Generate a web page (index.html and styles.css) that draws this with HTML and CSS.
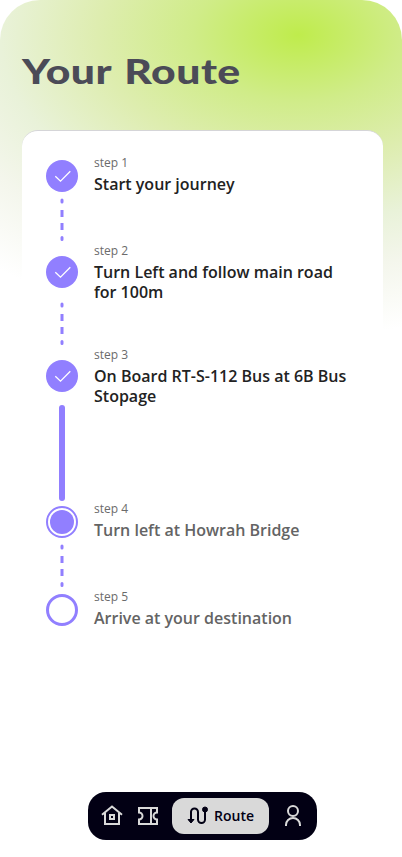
FILE: index.html
```html
<!DOCTYPE html>
<html lang="en">
<head>
<meta charset="utf-8">
<meta name="viewport" content="width=device-width, initial-scale=1">
<title>Your Route</title>
<link rel="stylesheet" href="styles.css">
</head>
<body>
<main class="screen">
  <h1 class="title"><span>Your Route</span></h1>
  <ol class="card">
    <li class="step">
      <div class="rail">
        <span class="dot done"><svg viewBox="0 0 32 32"><path d="M9.300 16.200l5.200 5L24.300 11.200"/></svg></span>
        <svg class="dashes" viewBox="0 0 4 44"><path d="M2 2v2M2 39.500v2"/><path class="flat" d="M2 12v7M2 25v7"/></svg>
      </div>
      <div class="text"><p class="label">step 1</p><p class="name">Start your journey</p></div>
    </li>
    <li class="step tall">
      <div class="rail low">
        <span class="dot done"><svg viewBox="0 0 32 32"><path d="M9.300 16.200l5.200 5L24.300 11.200"/></svg></span>
        <svg class="dashes far" viewBox="0 0 4 44"><path d="M2 2v2M2 39.500v2"/><path class="flat" d="M2 12v7M2 25v7"/></svg>
      </div>
      <div class="text"><p class="label">step 2</p><p class="name">Turn Left and follow main road for 100m</p></div>
    </li>
    <li class="step current">
      <div class="rail low">
        <span class="dot done"><svg viewBox="0 0 32 32"><path d="M9.300 16.200l5.200 5L24.300 11.200"/></svg></span>
        <span class="bar"></span>
      </div>
      <div class="text"><p class="label">step 3</p><p class="name">On Board RT-S-112 Bus at 6B Bus Stopage</p></div>
    </li>
    <li class="step pending">
      <div class="rail">
        <span class="dot active"></span>
        <svg class="dashes" viewBox="0 0 4 44"><path d="M2 2v2M2 39.500v2"/><path class="flat" d="M2 12v7M2 25v7"/></svg>
      </div>
      <div class="text"><p class="label">step 4</p><p class="name">Turn left at Howrah Bridge</p></div>
    </li>
    <li class="step pending">
      <div class="rail"><span class="dot empty"></span></div>
      <div class="text"><p class="label">step 5</p><p class="name">Arrive at your destination</p></div>
    </li>
  </ol>
  <nav class="nav">
    <svg class="icon" viewBox="0 0 24 24"><path d="M2 10.700L12 2.500l10 8.200M5 9v11h14V9M10 11h4v4h-4z"/></svg>
    <svg class="icon" viewBox="0 0 24 24"><path d="M3 4h18v4.500a3.500 3.500 0 0 0 0 7V20H3v-4.500a3.500 3.500 0 0 0 0-7zM15 4v16"/></svg>
    <a class="tab">
      <svg class="icon" viewBox="0 0 24 24"><path d="M5 16.500V8a3.500 3.500 0 0 1 7 0v7.500a3.500 3.500 0 0 0 7 0V6"/><path class="solid" d="M2 15.500h6L5 19z"/><circle class="solid" cx="19" cy="5.500" r="2.500"/></svg>
      <span>Route</span>
    </a>
    <svg class="icon" viewBox="0 0 24 24"><circle cx="12" cy="7" r="5"/><path d="M5 22v-1a7 7 0 0 1 14 0v1"/></svg>
  </nav>
</main>
</body>
</html>
```
FILE: styles.css
```css
* { box-sizing: border-box; margin: 0; padding: 0; }
body { background: #fff; font-family: "Open Sans", sans-serif; }
.screen {
  width: 402px;
  height: 857px;
  display: flex;
  flex-direction: column;
  border-radius: 40px;
  overflow: hidden;
  background: radial-gradient(480px 300px at 298px 35px, #bfec4c 0%, #d0ec89 22%, #deedb0 42%, #e9f2d9 62%, #f4f6ec 78%, #fff 100%);
}
.title {
  height: 130px;
  padding: 46px 0 0 22px;
  font: 900 35px/48px Lato, sans-serif;
  color: #4b4b57;
}
.title span {
  display: inline-block;
  letter-spacing: 0.4px;
  word-spacing: 2px;
  transform: scaleX(1.22);
  transform-origin: left;
  white-space: nowrap;
}
.card {
  width: 361px;
  height: 662px;
  flex: none;
  margin-left: 22px;
  padding: 24px 24px 0;
  list-style: none;
  background: #fff;
  border-radius: 16px 16px 0 0;
  border-top: 1px solid #d5d5d8;
}
.step { display: flex; gap: 16px; height: 88px; }
.tall { height: 104px; }
.current { height: 154px; }
.rail { width: 32px; display: flex; flex-direction: column; align-items: center; padding-top: 5px; }
.low { padding-top: 13px; }
.dot { width: 32px; height: 32px; flex: none; border-radius: 50%; }
.done { background: #917fff; }
.done svg { display: block; fill: none; stroke: #fff; stroke-width: 1.300; }
.active { border: 2px solid #917fff; background: #917fff; background-clip: content-box; padding: 2px; }
.empty { border: 3px solid #917fff; }
.dashes { width: 4px; height: 44px; margin-top: 6px; flex: none; fill: none; stroke: #917fff; stroke-width: 3; stroke-linecap: round; }
.flat { stroke-linecap: butt; }
.far { margin-top: 14px; }
.bar { width: 6px; height: 96px; flex: none; margin-top: 13px; border-radius: 3px; background: #917fff; }
.text { width: 260px; flex: none; }
.label { font-size: 12px; line-height: 16px; color: #6b6b6b; }
.name { margin-top: 3px; font-size: 16px; line-height: 20px; font-weight: 600; color: #222; }
.pending .name { color: #646464; }
.nav {
  width: 229px;
  height: 48px;
  flex: none;
  margin-left: 88px;
  padding: 0 12px;
  display: flex;
  align-items: center;
  gap: 12px;
  border-radius: 18px;
  background: #020014;
}
.icon { width: 24px; height: 24px; flex: none; fill: none; stroke: #d9d9d9; stroke-width: 2; }
.tab {
  width: 97px;
  height: 36px;
  flex: none;
  display: flex;
  align-items: center;
  padding-left: 14px;
  gap: 4px;
  border-radius: 12px;
  background: #d9d9d9;
  color: #020014;
  font-size: 14px;
  font-weight: 600;
}
.tab span { padding-bottom: 2px; }
.tab .icon { stroke: #020014; }
.solid { fill: #020014; stroke-width: 1; }
```
